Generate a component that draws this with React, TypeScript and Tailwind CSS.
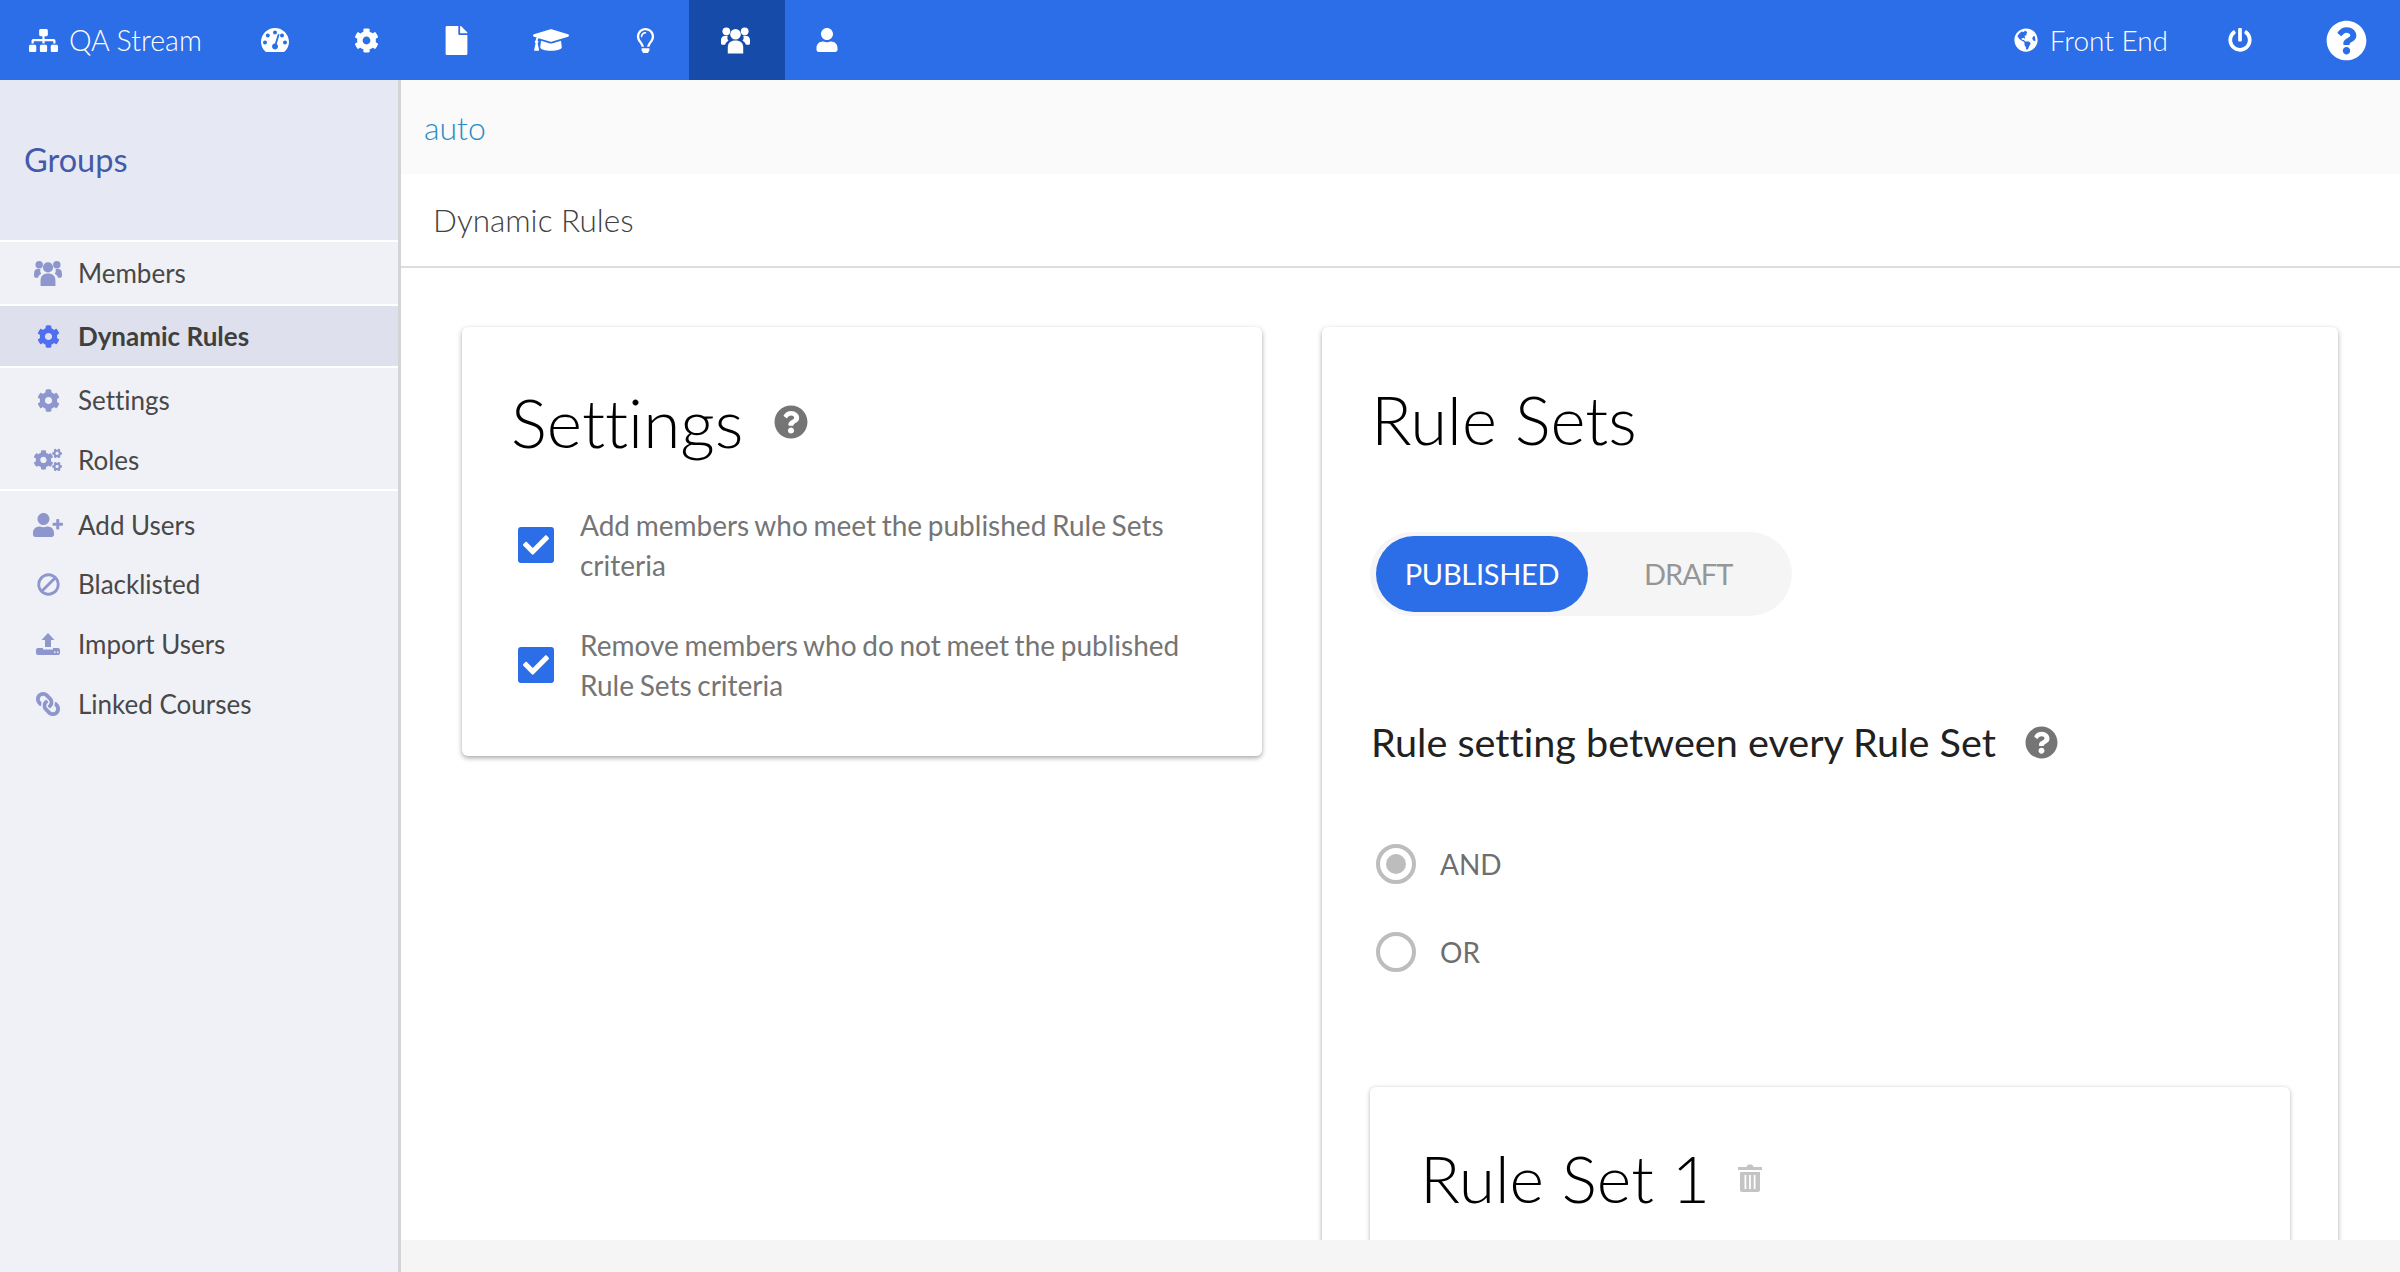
import React from "react";
import {
  FaSitemap,
  FaCog,
  FaFile,
  FaGraduationCap,
  FaRegLightbulb,
  FaUser,
  FaGlobeAmericas,
  FaPowerOff,
  FaQuestionCircle,
  FaCogs,
  FaUserPlus,
  FaBan,
  FaLink,
  FaCheck,
} from "react-icons/fa";

const Dashboard = ({ className }: { className?: string }) => (
  <svg viewBox="0 0 28 24" className={className} fill="currentColor">
    <path
      fillRule="evenodd"
      d="M5 24C1.8 21.5 0 17.8 0 14 0 6.3 6.3 0 14 0s14 6.3 14 14c0 3.8-1.8 7.5-5 10H5zM14 2.6a2 2 0 1 0 0 4 2 2 0 0 0 0-4zM6.8 5.6a2 2 0 1 0 0 4 2 2 0 0 0 0-4zM21 5.6a2 2 0 1 0 0 4 2 2 0 0 0 0-4zM4 12.4a2 2 0 1 0 0 4 2 2 0 0 0 0-4zM24 12.4a2 2 0 1 0 0 4 2 2 0 0 0 0-4zM18.6 6.6l-1.7-.5-3 9.3a3 3 0 1 0 1.8.5l2.9-9.3z"
    />
  </svg>
);

const ImportIcon = ({ className }: { className?: string }) => (
  <svg viewBox="0 0 24 22" className={className} fill="currentColor">
    <path
      fillRule="evenodd"
      d="M12 0l6.5 7H15v7H9V7H5.5L12 0zM2 15h5v1.500h10V15h5c1 0 2 .8 2 2v3c0 1.200-1 2-2 2H2c-1 0-2-.8-2-2v-3c0-1.200 1-2 2-2zm16 3.500v1.500h1.500v-1.500H18zm3 0v1.500h1.500v-1.500H21z"
    />
  </svg>
);

const Group = ({ className }: { className?: string }) => (
  <svg viewBox="0 0 30 28" className={className} fill="currentColor">
    <circle cx="15" cy="8" r="5.500" />
    <circle cx="5.500" cy="5" r="4" />
    <circle cx="24.500" cy="5" r="4" />
    <path d="M7 28v-6c0-5 3-7.500 8-7.500s8 2.500 8 7.500v6c-3 0-13 0-16 0z" />
    <path d="M0 17v-3c0-3 2-4.500 5-4.500h2c-.8 2-.4 4 .8 5.200-2 1-3 2.300-3.600 4.300H2c-1.400 0-2-.7-2-2z" />
    <path d="M30 17v-3c0-3-2-4.500-5-4.500h-2c.8 2 .4 4-.8 5.200 2 1 3 2.300 3.600 4.300H28c1.400 0 2-.7 2-2z" />
  </svg>
);

const Trash = ({ className }: { className?: string }) => (
  <svg viewBox="0 0 24 28" className={className} fill="currentColor">
    <path
      fillRule="evenodd"
      d="M0 3h8.500C9 1 10 .5 12 .5S15 1 15.500 3H24v3H0V3zM2 8h20v18c0 1.200-.8 2-2 2H4c-1.200 0-2-.8-2-2V8zm4.500 3v14h1.800V11H6.500zm4.600 0v14h1.800V11h-1.800zm4.600 0v14h1.800V11h-1.800z"
    />
  </svg>
);

const topIcons = [
  { icon: <Dashboard className="w-[28px] h-[24px]" />, w: "w-[90px]" },
  { icon: <FaCog className="text-[25px]" />, w: "w-[92px]" },
  { icon: <FaFile className="text-[29px]" />, w: "w-[88px]" },
  { icon: <FaGraduationCap className="text-[36px]" />, w: "w-[102px]" },
  { icon: <FaRegLightbulb className="text-[25px]" />, w: "w-[87px]" },
];

const SideItem = ({
  icon,
  label,
  active,
  h,
}: {
  icon: React.ReactNode;
  label: string;
  active?: boolean;
  h: string;
}) => (
  <div
    className={`flex items-center pl-[33px] ${h} ${
      active ? "bg-[#dee1ed] font-bold text-[#3f3f3f]" : "text-[#484848]"
    }`}
  >
    <span
      className={`w-[30px] flex justify-center ${
        active ? "text-[#4f6ff0]" : "text-[#8d97cd]"
      }`}
    >
      {icon}
    </span>
    <span className="ml-[15px] text-[26px]">{label}</span>
  </div>
);

const Divider = () => <div className="h-[2px] bg-white" />;

const CheckRow = ({ text }: { text: string }) => (
  <div className="flex items-center">
    <span className="w-[36px] h-[36px] rounded-[3px] bg-[#2c6de8] flex items-center justify-center text-white shrink-0 ml-[7px]">
      <FaCheck className="text-[26px]" />
    </span>
    <p className="ml-[26px] text-[28px] [word-spacing:-1.5px] leading-[40px] text-[#757575] w-[640px]">
      {text}
    </p>
  </div>
);

const Radio = ({ label, on }: { label: string; on?: boolean }) => (
  <div className="flex items-center h-[40px]">
    <span className="w-[40px] h-[40px] rounded-full border-[4px] border-[#bdbdbd] flex items-center justify-center">
      {on && <span className="w-[20px] h-[20px] rounded-full bg-[#bdbdbd]" />}
    </span>
    <span className="ml-[24px] text-[28px] text-[#6e6e6e]">{label}</span>
  </div>
);

export default function App() {
  return (
    <div className="h-[1272px] w-[2400px] overflow-hidden flex flex-col font-['Lato','Noto_Sans',sans-serif] [font-variant-ligatures:none] bg-white">
      {/* Top bar */}
      <header className="h-[80px] shrink-0 bg-[#2c6de8] text-white flex items-center">
        <div className="flex items-center pl-[29px] w-[230px]">
          <FaSitemap className="text-[29px]" />
          <span className="ml-[11px] text-[28.5px] font-light">QA Stream</span>
        </div>
        {topIcons.map((t, i) => (
          <div key={i} className={`${t.w} flex justify-center`}>
            {t.icon}
          </div>
        ))}
        <div className="w-[96px] h-[80px] bg-[#174ba9] flex items-center justify-center pr-[4px]">
          <Group className="w-[29px] h-[28px]" />
        </div>
        <div className="w-[84px] flex justify-center">
          <FaUser className="text-[24px]" />
        </div>
        <div className="ml-auto flex items-center">
          <FaGlobeAmericas className="text-[24px]" />
          <span className="ml-[12px] text-[28px] font-light">Front End</span>
          <FaPowerOff className="text-[24px] ml-[60px]" />
          <FaQuestionCircle className="text-[41px] ml-[74px] mr-[33px]" />
        </div>
      </header>

      <div className="flex-1 flex min-h-0">
        {/* Sidebar */}
        <aside className="w-[401px] shrink-0 bg-[#f0f1f6] border-r-[3px] border-[#d4d4d6]">
          <div className="h-[160px] bg-[#e6e9f4] flex items-center pl-[24px] text-[32.500px] text-[#4459a8]">
            Groups
          </div>
          <Divider />
          <SideItem h="h-[62px]" icon={<Group className="w-[28px] h-[26px]" />} label="Members" />
          <Divider />
          <SideItem h="h-[60px]" active icon={<FaCog className="text-[23px]" />} label="Dynamic Rules" />
          <Divider />
          <SideItem h="h-[63px] pt-[2px]" icon={<FaCog className="text-[23px]" />} label="Settings" />
          <SideItem h="h-[58px]" icon={<FaCogs className="text-[28px]" />} label="Roles" />
          <Divider />
          <SideItem h="h-[63px] pt-[5px]" icon={<FaUserPlus className="text-[30px]" />} label="Add Users" />
          <SideItem h="h-[60px]" icon={<FaBan className="text-[23px] -scale-x-100" />} label="Blacklisted" />
          <SideItem h="h-[60px]" icon={<ImportIcon className="w-[24px] h-[22px]" />} label="Import Users" />
          <SideItem h="h-[60px]" icon={<FaLink className="text-[24px] -scale-x-100" />} label="Linked Courses" />
        </aside>

        {/* Main */}
        <main className="flex-1 min-w-0 flex flex-col">
          <div className="h-[94px] shrink-0 bg-[#fafafa] flex items-center pl-[23px] pt-[2px] text-[32px] font-light text-[#2b8bc6]">
            auto
          </div>
          <div className="h-[94px] shrink-0 flex items-center pl-[32px] pt-[1px] text-[31.5px] font-light text-[#424242] border-b-2 border-[#dddddd]">
            Dynamic Rules
          </div>
          <div className="flex-1 min-h-0 overflow-hidden flex items-start pl-[61px] pt-[59px]">
            <section className="w-[800px] h-[429px] shrink-0 rounded-[6px] bg-white shadow-[0_2px_5px_rgba(0,0,0,0.35)] px-[49px] pt-[53px]">
              <div className="flex items-center">
                <h2 className="text-[67.500px] leading-[84px] font-light text-black">Settings</h2>
                <FaQuestionCircle className="text-[34px] text-[#757575] ml-[31px]" />
              </div>
              <div className="mt-[41px] flex flex-col gap-[40px]">
                <CheckRow text="Add members who meet the published Rule Sets criteria" />
                <CheckRow text="Remove members who do not meet the published Rule Sets criteria" />
              </div>
            </section>

            <section className="w-[1016px] h-[1000px] shrink-0 ml-[60px] rounded-[6px] bg-white shadow-[0_2px_5px_rgba(0,0,0,0.35)] pl-[49px] pr-[47px] pt-[50px]">
              <h2 className="text-[67px] leading-[84px] font-light text-black">Rule Sets</h2>
              <div className="mt-[71px] w-[422px] h-[84px] rounded-full bg-[#f5f5f5] flex items-center pl-[6px] -ml-[1px]">
                <span className="w-[212px] h-[76px] rounded-full bg-[#2c6de8] text-white text-[29px] tracking-[-0.3px] flex items-center justify-center">
                  PUBLISHED
                </span>
                <span className="ml-[30px] text-[29px] tracking-[-1px] text-[#969696] pl-[26px]">DRAFT</span>
              </div>
              <div className="mt-[101px] flex items-center">
                <h3 className="text-[39.600px] leading-[50px] text-[#212121]">Rule setting between every Rule Set</h3>
                <FaQuestionCircle className="text-[33px] text-[#757575] ml-[29px]" />
              </div>
              <div className="mt-[77px] flex flex-col gap-[48px] pl-[5px]">
                <Radio on label="AND" />
                <Radio label="OR" />
              </div>
              <div className="mt-[115px] w-[920px] h-[400px] rounded-[6px] bg-white shadow-[0_1px_4px_rgba(0,0,0,0.3)] pl-[50px] pt-[49px] -ml-[1px]">
                <div className="flex items-center">
                  <h2 className="text-[66px] leading-[84px] font-light text-black">Rule Set 1</h2>
                  <Trash className="w-[24px] h-[28px] text-[#c4c4c4] ml-[28px]" />
                </div>
              </div>
            </section>
          </div>
          <div className="h-[32px] shrink-0 bg-[#f5f5f5]" />
        </main>
      </div>
    </div>
  );
}
